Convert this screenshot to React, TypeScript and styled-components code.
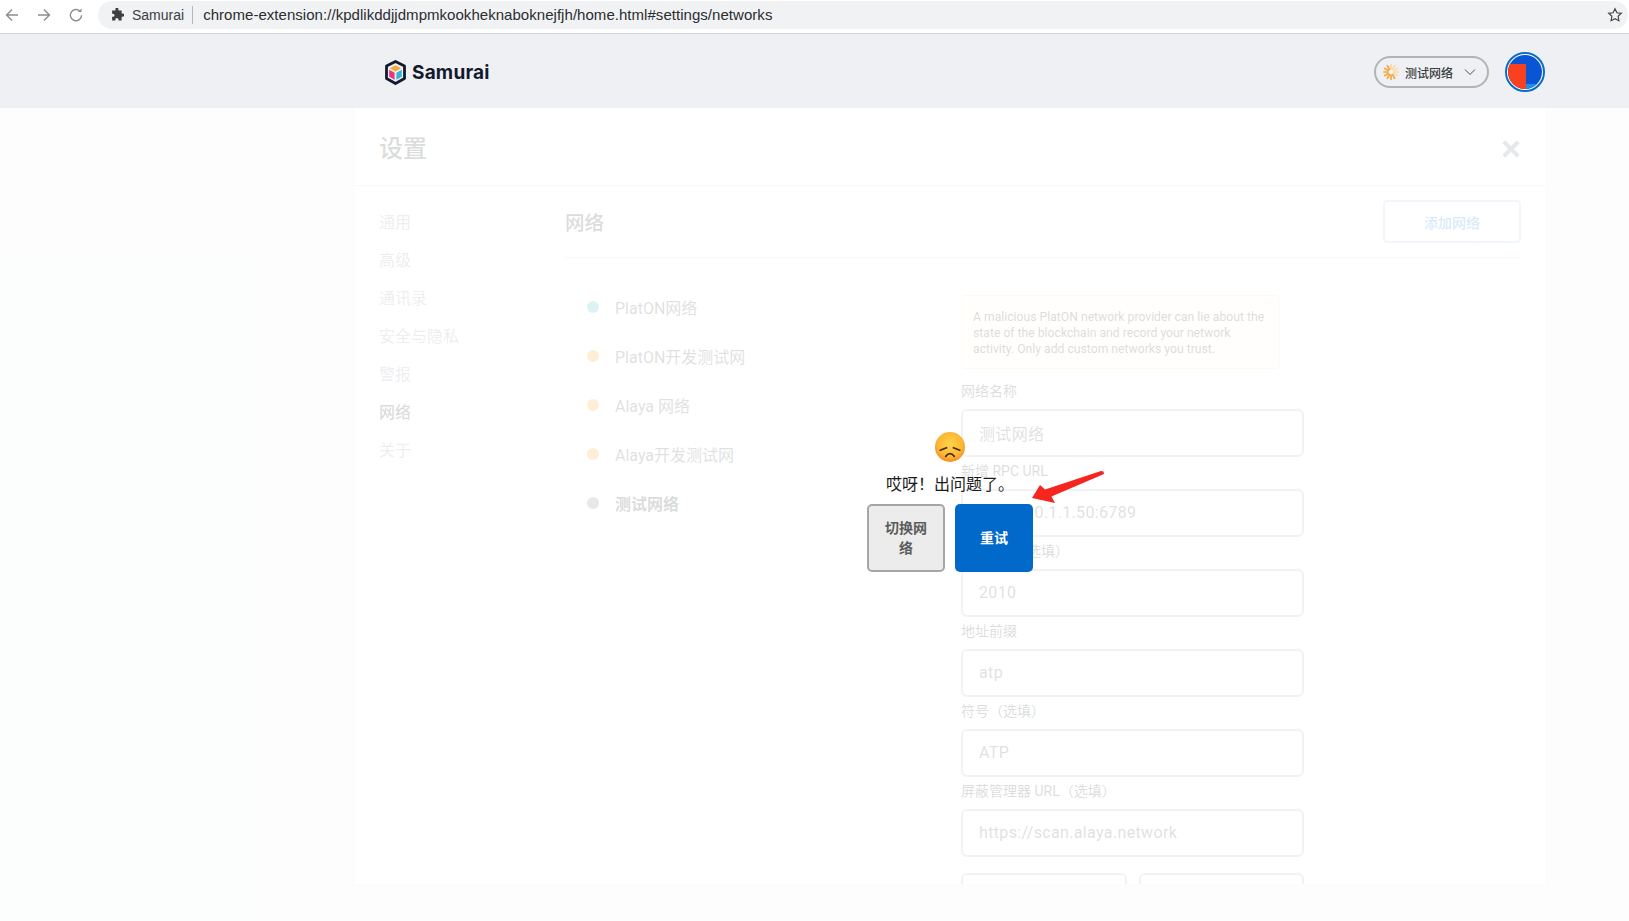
import React from 'react';
import styled, { createGlobalStyle } from 'styled-components';

const CJK = `Roboto, 'Noto Sans CJK SC', sans-serif`;

const GlobalStyle = createGlobalStyle`
   html, body { margin: 0; padding: 0; height: 100%; overflow: hidden; }
   body { background: #eff0f3; font-family: ${CJK}; color: #24272a; }
   * { box-sizing: border-box; }
`;

const sideItems = ['通用', '高级', '通讯录', '安全与隐私', '警报', '网络', '关于'];

const networks = [
   { name: 'PlatON网络', color: '#29b6af' },
   { name: 'PlatON开发测试网', color: '#ff9800' },
   { name: 'Alaya 网络', color: '#ff9800' },
   { name: 'Alaya开发测试网', color: '#ff9800' },
   { name: '测试网络', color: '#6a737d', active: true },
];

const fields = [
   { label: '网络名称', value: '测试网络' },
   { label: '新增 RPC URL', value: 'http://10.1.1.50:6789' },
   { label: 'Chain ID（选填）', value: '2010' },
   { label: '地址前缀', value: 'atp' },
   { label: '符号（选填）', value: 'ATP' },
   { label: '屏蔽管理器 URL（选填）', value: 'https://scan.alaya.network' },
];

const App: React.FC = () => {

   return (
      <>
         <GlobalStyle />
         <BrowserBar>
            <NavIcon viewBox="0 0 16 16">
               <path d="M14 8H2.5M8 2.5 2.5 8 8 13.5" />
            </NavIcon>
            <NavIcon viewBox="0 0 16 16">
               <path d="M2 8h11.5M8 2.5 13.5 8 8 13.5" />
            </NavIcon>
            <NavIcon viewBox="0 0 16 16">
               <path d="M13.6 8.2A5.6 5.6 0 1 1 12 4.2" />
               <path d="M13.5 1.5v3.6H9.9" fill="#8a8d91" stroke="none" />
            </NavIcon>
            <Omnibox>
               <PuzzleIcon viewBox="0 0 16 16">
                  <path d="M6.2 1.2a1.7 1.7 0 0 1 3.4 0v1.6h3.7v3.5h1.1a1.8 1.8 0 0 1 0 3.6h-1.1v4.4H9.7v-1.2a1.8 1.8 0 0 0-3.6 0v1.2H2.4v-4.2h1a1.8 1.8 0 0 0 0-3.6h-1V2.8h3.8z" />
               </PuzzleIcon>
               <SiteName>Samurai</SiteName>
               <UrlText>chrome-extension://kpdlikddjjdmpmkookheknaboknejfjh/home.html#settings/networks</UrlText>
               <StarIcon viewBox="0 0 16 16">
                  <path d="m8 1.8 1.9 4 4.4.5-3.2 3 .8 4.4L8 11.6l-3.9 2.1.8-4.4-3.2-3 4.4-.5z" />
               </StarIcon>
            </Omnibox>
         </BrowserBar>

         <AppHeader>
            <HeaderInner>
               <LogoBox>
                  <svg width="23" height="25" viewBox="0 0 23 25">
                     <path d="M11.5 1.5 20.5 6v12.5l-9 5-9-5V6z" fill="none" stroke="#141a2e" strokeWidth="2.8" strokeLinejoin="round" />
                     <path d="M5.8 8.2 11.5 5.2l5.7 3-5.7 3.2z" fill="#f7a83a" />
                     <path d="M5.2 9.7 10.6 12.7v7L5.2 16.8z" fill="#e9357c" />
                     <path d="M17.8 9.7 12.4 12.7v7l5.4-2.9z" fill="#34b6d8" />
                  </svg>
                  <LogoText>Samurai</LogoText>
               </LogoBox>
               <NetworkPill>
                  <svg width="16" height="16" viewBox="0 0 16 16">
                     {[0, 30, 60, 90, 120, 150, 180, 210, 240, 270, 300, 330].map((deg) => (
                        <line key={deg} x1="8" y1="0.8" x2="8" y2="5" stroke={deg >= 150 && deg <= 330 ? '#f6a53a' : '#fcd9a8'} strokeWidth="1.7" strokeLinecap="round" transform={`rotate(${deg} 8 8)`} />
                     ))}
                  </svg>
                  <PillText>测试网络</PillText>
                  <svg width="14" height="14" viewBox="0 0 14 14" fill="none" stroke="#4b5157" strokeWidth="1">
                     <path d="m2 4.5 5 5 5-5" />
                  </svg>
               </NetworkPill>
               <Avatar>
                  <svg width="34" height="34" viewBox="0 0 34 34">
                     <clipPath id="avatar-clip"><circle cx="17" cy="17" r="17" /></clipPath>
                     <g clipPath="url(#avatar-clip)">
                        <rect width="34" height="34" fill="#0a54d6" />
                        <rect x="0" y="9" width="18" height="25" fill="#f9401f" />
                        <rect x="18" y="29" width="16" height="5" fill="#1c8fe8" />
                     </g>
                  </svg>
               </Avatar>
            </HeaderInner>
         </AppHeader>

         <Main>
            <Panel>
               <PanelHead>
                  <PanelTitle>设置</PanelTitle>
                  <CloseIcon viewBox="0 0 18 18">
                     <path d="M2.5 2.5l13 13M15.5 2.5l-13 13" />
                  </CloseIcon>
               </PanelHead>
               <PanelBody>
                  <SideNav>
                     {sideItems.map((item) => (
                        <SideItem key={item} $active={item === '网络'}>{item}</SideItem>
                     ))}
                  </SideNav>
                  <Content>
                     <SectionHead>
                        <SectionTitle>网络</SectionTitle>
                        <AddButton>添加网络</AddButton>
                     </SectionHead>
                     <Columns>
                        <NetworkList>
                           {networks.map((n) => (
                              <NetworkRow key={n.name} $active={n.active}>
                                 <Dot $color={n.color} />
                                 {n.name}
                              </NetworkRow>
                           ))}
                        </NetworkList>
                        <Form>
                           <Warning>
                              A malicious PlatON network provider can lie about the state of the blockchain and record your network activity. Only add custom networks you trust.
                           </Warning>
                           {fields.map((f) => (
                              <Field key={f.label}>
                                 <FieldLabel>{f.label}</FieldLabel>
                                 <FieldInput>{f.value}</FieldInput>
                              </Field>
                           ))}
                           <ButtonRow>
                              <GhostButton />
                              <GhostButton />
                           </ButtonRow>
                        </Form>
                     </Columns>
                  </Content>
               </PanelBody>
            </Panel>

            <Overlay>
               <ErrorBox>
                  <FaceIcon viewBox="0 0 30 30">
                     <defs>
                        <radialGradient id="face" cx="50%" cy="42%" r="62%">
                           <stop offset="0%" stopColor="#ffd24a" />
                           <stop offset="65%" stopColor="#fdb833" />
                           <stop offset="100%" stopColor="#f2811f" />
                        </radialGradient>
                     </defs>
                     <circle cx="15" cy="15" r="15" fill="url(#face)" />
                     <path d="M5.2 18.3 11.6 15.7M24.8 18.3 18.4 15.7" stroke="#4a2b10" strokeWidth="1.7" strokeLinecap="round" fill="none" />
                     <path d="M10.7 24.4Q15 19 19.3 24.4" stroke="#4a2b10" strokeWidth="1.7" strokeLinecap="round" fill="none" />
                  </FaceIcon>
                  <ErrorText>哎呀！出问题了。</ErrorText>
                  <ErrorActions>
                     <SwitchButton>切换网络</SwitchButton>
                     <RetryButton>重试</RetryButton>
                  </ErrorActions>
                  <RedArrow viewBox="0 0 75 35" width="75" height="35">
                     <path d="M2 28 10 15 15 19.5 71 1 73.5 1.5 74 4 21.5 26.5 25 33z" fill="#f5261f" strokeLinejoin="round" />
                  </RedArrow>
               </ErrorBox>
            </Overlay>
         </Main>
      </>
   );

};

const BrowserBar = styled.div`
   display: flex;
   align-items: center;
   height: 34px;
   padding: 0 1px 4px 4px;
   background: #ffffff;
   border-bottom: 1px solid #d3d5d8;
`;

const NavIcon = styled.svg`
   width: 16px;
   height: 16px;
   margin-right: 16px;
   fill: none;
   stroke: #8a8d91;
   stroke-width: 1.4;
   flex-shrink: 0;
`;

const Omnibox = styled.div`
   display: flex;
   align-items: center;
   flex: 1;
   height: 28px;
   margin-left: -2px;
   padding: 0 5px 0 12px;
   border-radius: 14px;
   background: #f0f2f4;
`;

const PuzzleIcon = styled.svg`
   width: 14px;
   height: 14px;
   fill: #3c4043;
   margin-right: 8px;
`;

const SiteName = styled.span`
   font-family: 'Liberation Sans', sans-serif;
   font-size: 14px;
   color: #3c4043;
   padding-right: 8px;
   border-right: 1px solid #b4b7ba;
   line-height: 18px;
`;

const UrlText = styled.span`
   flex: 1;
   margin-left: 10px;
   font-family: 'Liberation Sans', sans-serif;
   font-size: 15px;
   letter-spacing: 0.04px;
   color: #2b2e31;
`;

const StarIcon = styled.svg`
   width: 16px;
   height: 16px;
   fill: none;
   stroke: #45484b;
   stroke-width: 1.2;
`;

const AppHeader = styled.header`
   height: 74px;
   background: #eff0f3;
   padding-left: 354px;
`;

const HeaderInner = styled.div`
   display: flex;
   align-items: center;
   width: 1192px;
   height: 100%;
   padding: 2px 1px 0 30px;
`;

const LogoBox = styled.div`
   display: flex;
   align-items: center;
   gap: 5px;
   margin-right: auto;
`;

const LogoText = styled.span`
   font-family: Inter, sans-serif;
   font-size: 19px;
   font-weight: 700;
   letter-spacing: 0.2px;
   color: #141a2e;
`;

const NetworkPill = styled.div`
   display: flex;
   align-items: center;
   width: 115px;
   height: 32px;
   padding: 0 10px 0 7px;
   border: 2px solid #b0b4b9;
   border-radius: 16px;
`;

const PillText = styled.span`
   flex: 1;
   margin-left: 6px;
   font-size: 12px;
   font-weight: 500;
   color: #3a3f44;
`;

const Avatar = styled.div`
   display: flex;
   align-items: center;
   justify-content: center;
   width: 40px;
   height: 40px;
   margin-left: 16px;
   border: 2px solid #0a6ec4;
   border-radius: 50%;
   background: #ffffff;
`;

const Main = styled.main`
   position: relative;
   height: 813px;
   padding-left: 354px;
   overflow: hidden;
`;

const Panel = styled.section`
   width: 1192px;
   height: 776px;
   background: #ffffff;
   overflow: hidden;
   box-shadow: 0 0 3px rgba(0, 0, 0, 0.07);
`;

const PanelHead = styled.div`
   display: flex;
   align-items: center;
   justify-content: space-between;
   height: 78px;
   padding: 5px 25px 0 25px;
   border-bottom: 1px solid #d2d8dd;
`;

const PanelTitle = styled.h1`
   margin: -5px 0 0;
   font-size: 24px;
   font-weight: 500;
   color: #24272a;
`;

const CloseIcon = styled.svg`
   width: 20px;
   height: 20px;
   fill: none;
   stroke: #6a737d;
   stroke-width: 3.6;
`;

const PanelBody = styled.div`
   display: flex;
`;

const SideNav = styled.nav`
   display: flex;
   flex-direction: column;
   width: 210px;
   padding: 18px 0 0 25px;
`;

const SideItem = styled.div<{ $active?: boolean }>`
   height: 38px;
   line-height: 38px;
   font-size: 16px;
   color: ${(p) => (p.$active ? '#24272a' : '#8e959c')};
   font-weight: ${(p) => (p.$active ? 500 : 400)};
`;

const Content = styled.div`
   flex: 1;
   padding-right: 25px;
`;

const SectionHead = styled.div`
   display: flex;
   align-items: center;
   justify-content: space-between;
   height: 72px;
   padding: 0 0 0 1px;
   border-bottom: 1px solid #d2d8dd;
`;

const SectionTitle = styled.h2`
   margin: 0;
   font-size: 19.5px;
   font-weight: 500;
   color: #24272a;
`;

const AddButton = styled.div`
   display: flex;
   align-items: center;
   justify-content: center;
   width: 138px;
   height: 43px;
   border: 2px solid #9fc6ea;
   border-radius: 4px;
   font-size: 14px;
   font-weight: 500;
   color: #037dd6;
`;

const Columns = styled.div`
   display: flex;
`;

const NetworkList = styled.div`
   display: flex;
   flex-direction: column;
   width: 397px;
   padding: 24px 0 0 23px;
`;

const NetworkRow = styled.div<{ $active?: boolean }>`
   display: flex;
   align-items: center;
   height: 49px;
   font-size: 16px;
   color: ${(p) => (p.$active ? '#24272a' : '#3e4347')};
   font-weight: ${(p) => (p.$active ? 700 : 400)};
`;

const Dot = styled.span<{ $color: string }>`
   width: 12px;
   height: 12px;
   margin: 1px 16px 0 0;
   border-radius: 50%;
   background: ${(p) => p.$color};
`;

const Form = styled.div`
   display: flex;
   flex-direction: column;
   width: 343px;
   padding-top: 37px;
`;

const Warning = styled.div`
   width: 319px;
   height: 74px;
   padding: 13px 11px 0;
   margin-bottom: 8px;
   border: 1px solid #ffd9a0;
   border-radius: 4px;
   background: #fff8ea;
   font-size: 12.2px;
   line-height: 16px;
   color: #24272a;
`;

const Field = styled.div`
   display: flex;
   flex-direction: column;
   height: 80px;
`;

const FieldLabel = styled.label`
   height: 32px;
   line-height: 28px;
   font-size: 14px;
   color: #2a2f34;
`;

const FieldInput = styled.div`
   display: flex;
   align-items: center;
   height: 48px;
   padding: 0 16px 1px;
   border: 2px solid #a9b0b6;
   border-radius: 6px;
   font-size: 16px;
   letter-spacing: 0.35px;
   color: #3e4347;
   white-space: nowrap;
   overflow: hidden;
`;

const ButtonRow = styled.div`
   display: flex;
   gap: 12px;
   margin-top: 16px;
`;

const GhostButton = styled.div`
   flex: 1;
   height: 48px;
   border: 2px solid #a9b0b6;
   border-radius: 6px;
`;

const Overlay = styled.div`
   position: absolute;
   inset: 0;
   background: rgba(255, 255, 255, 0.84);
`;

const ErrorBox = styled.div`
   position: absolute;
   left: 867px;
   top: 324px;
   display: flex;
   flex-direction: column;
   align-items: center;
   width: 166px;
`;

const FaceIcon = styled.svg`
   width: 30px;
   height: 30px;
`;

const ErrorText = styled.div`
   margin-top: 12px;
   font-size: 16px;
   line-height: 22px;
   color: #1b1b1b;
   white-space: nowrap;
`;

const ErrorActions = styled.div`
   display: flex;
   gap: 10px;
   margin-top: 8px;
`;

const SwitchButton = styled.button`
   width: 78px;
   height: 68px;
   padding: 0 14px 1px;
   border: 2px solid #a6a6a6;
   border-radius: 5px;
   background: #ececec;
   font-family: ${CJK};
   font-size: 14px;
   font-weight: 700;
   line-height: 20px;
   color: #5c5c5c;
`;

const RetryButton = styled.button`
   width: 78px;
   height: 68px;
   padding: 0 0 3px;
   border: none;
   border-radius: 5px;
   background: #0069c9;
   font-family: ${CJK};
   font-size: 14px;
   font-weight: 700;
   color: #ffffff;
`;

const RedArrow = styled.svg`
   position: absolute;
   left: 163px;
   top: 38px;
`;

export default App;
